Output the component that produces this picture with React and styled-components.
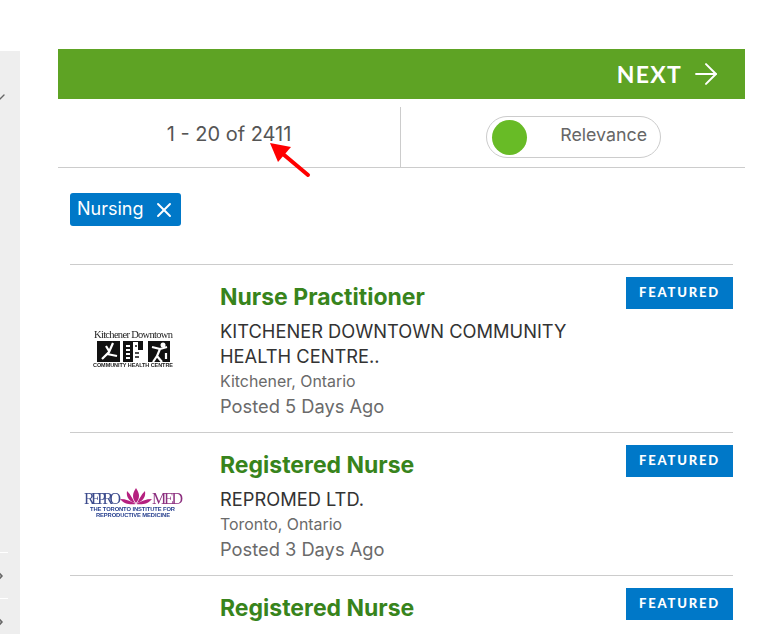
import React from 'react';
import styled, { createGlobalStyle } from 'styled-components';
import { ArrowRight, ChevronDown, ChevronRight, X } from 'lucide-react';

const GlobalStyle = createGlobalStyle`
  html, body {
    margin: 0;
    height: 634px;
    overflow: hidden;
    background: #fff;
    font-family: Inter, "Liberation Sans", sans-serif;
  }
`;

const Page = styled.div`
  display: flex;
  height: 634px;
  overflow: hidden;
`;

const Sidebar = styled.aside`
  width: 20px;
  margin-top: 51px;
  background: #eee;
  color: #666;
  display: flex;
  flex-direction: column;
  overflow: hidden;
`;

const SideTop = styled.div`
  flex: none;
  height: 501px;
  padding-top: 38px;
  box-sizing: border-box;
  svg { display: block; margin-left: -8px; }
`;

const SideItem = styled.div`
  flex: none;
  width: 8px;
  height: 45px;
  border-top: 1px solid #fff;
  display: flex;
  align-items: center;
  svg { flex: none; margin-left: -8px; }
`;

const Main = styled.main`
  width: 687px;
  margin: 49px 0 0 38px;
`;

const NextBar = styled.div`
  height: 50px;
  background: #5ea324;
  color: #fff;
  display: flex;
  align-items: center;
  justify-content: flex-end;
  gap: 7px;
  padding-right: 22px;
  font: 700 23px Lato, sans-serif;
  letter-spacing: 1.3px;
  line-height: 48px;
`;

const Stats = styled.div`
  display: flex;
  height: 60px;
  padding-top: 8px;
  border-bottom: 1px solid #ccc;
`;

const Count = styled.div`
  position: relative;
  width: 342px;
  padding-bottom: 6px;
  box-sizing: border-box;
  display: flex;
  align-items: center;
  justify-content: center;
  font-size: 20px;
  color: #555;
`;

const Pointer = styled.svg`
  position: absolute;
  left: 205px;
  top: 28px;
`;

const SortCell = styled.div`
  flex: 1;
  border-left: 1px solid #ccc;
  display: flex;
  align-items: center;
  justify-content: center;
`;

const SortToggle = styled.div`
  width: 175px;
  height: 42px;
  box-sizing: border-box;
  border: 1px solid #ccc;
  border-radius: 21px;
  padding: 0 13px 0 5px;
  margin-left: 1px;
  display: flex;
  align-items: center;
  justify-content: space-between;
  font-size: 17.8px;
  color: #666;
`;

const SortLabel = styled.span`
  margin-bottom: 6px;
`;

const Knob = styled.span`
  width: 35px;
  height: 35px;
  border-radius: 50%;
  background: #68bb26;
`;

const Results = styled.div`
  padding: 25px 12px 0;
`;

const Tag = styled.div`
  display: inline-flex;
  align-items: center;
  gap: 8px;
  height: 33px;
  padding: 0 5px 0 7px;
  border-radius: 3px;
  background: #0078c8;
  color: #fff;
  font-size: 18px;
  margin-bottom: 38px;
`;

const TagLabel = styled.span`
  margin-bottom: 2px;
`;

const Row = styled.article`
  display: flex;
  border-top: 1px solid #ccc;
  padding: 16px 0 13px;
`;

const LogoCell = styled.div`
  width: 128px;
  margin-right: 22px;
  flex: none;
  display: flex;
  align-items: center;
  justify-content: center;
`;

const LogoArt = styled.svg`
  filter: blur(0.6px);
`;

const Info = styled.div`
  flex: 1;
  min-width: 0;
`;

const Title = styled.h3`
  margin: 0 0 6px;
  font-size: 23px;
  line-height: 32px;
  font-weight: 700;
  color: #38841c;
`;

const Company = styled.div`
  width: 360px;
  font-size: 18.3px;
  line-height: 25px;
  color: #333;
`;

const Location = styled.div`
  font-size: 15.9px;
  line-height: 25px;
  color: #6a6a6a;
`;

const Posted = styled.div`
  font-size: 18.3px;
  line-height: 25px;
  color: #6a6a6a;
`;

const Badge = styled.span`
  flex: none;
  align-self: flex-start;
  margin-top: -4px;
  width: 107px;
  height: 32px;
  padding-bottom: 2px;
  box-sizing: border-box;
  background: #0078c8;
  color: #fff;
  display: flex;
  align-items: center;
  justify-content: center;
  font: 900 13px Lato, sans-serif;
  letter-spacing: 1.8px;
`;

const KitchenerLogo = () => (
  <LogoArt width="128" height="48" viewBox="0 0 128 48">
    <text x="24" y="12" fontFamily="Liberation Serif, serif" fontSize="10.5" textLength="79" fill="#222">Kitchener Downtown</text>
    <rect x="27" y="15" width="23" height="21" fill="#111" />
    <rect x="53" y="15" width="20" height="21" fill="#111" />
    <rect x="78" y="15" width="22" height="21" fill="#111" />
    <path d="M32 33 L39 26 L43 17 M37 28 L47 30 M36 20 L39 25" stroke="#fff" strokeWidth="2.2" fill="none" />
    <path d="M63 36 V16 H68 V24 H73 V36 Z" fill="#fff" />
    <path d="M56 20h4M56 24h4M56 28h4M56 32h4" stroke="#fff" strokeWidth="1.8" />
    <path d="M65 20h2M65 27h4M65 31h4" stroke="#111" strokeWidth="1.4" />
    <circle cx="93" cy="19" r="2.5" fill="#fff" />
    <path d="M82 21 L90 23 L87 30 L92 36 M87 30 L83 36 M90 23 L97 21 M96 27 V33" stroke="#fff" strokeWidth="2.2" fill="none" />
    <text x="23" y="41" fontFamily="Liberation Sans, sans-serif" fontWeight="700" fontSize="5.5" textLength="80" fill="#222">COMMUNITY HEALTH CENTRE</text>
  </LogoArt>
);

const ReproLogo = () => (
  <LogoArt width="128" height="40" viewBox="0 0 128 40">
    <text x="14" y="18" fontFamily="Liberation Serif, serif" fontSize="16" textLength="37" fill="#3b4a8c">REPRO</text>
    <text x="82" y="18" fontFamily="Liberation Serif, serif" fontSize="16" textLength="31" fill="#8c2f7f">MED</text>
    <g fill="#b5207f">
      <path d="M66 2 C62 8 62 12 66 17 C70 12 70 8 66 2 Z" />
      <path d="M57 5 C56 11 59 15 65 17 C62 12 61 9 57 5 Z" />
      <path d="M75 5 C76 11 73 15 67 17 C70 12 71 9 75 5 Z" />
      <path d="M50 13 C54 18 60 19 66 18 C61 15 56 13 50 13 Z" />
      <path d="M82 13 C78 18 72 19 66 18 C71 15 76 13 82 13 Z" />
    </g>
    <text x="20" y="25" fontFamily="Liberation Sans, sans-serif" fontWeight="700" fontSize="5.8" textLength="85" fill="#27408f">THE TORONTO INSTITUTE FOR</text>
    <text x="26" y="31" fontFamily="Liberation Sans, sans-serif" fontWeight="700" fontSize="5.8" textLength="74" fill="#27408f">REPRODUCTIVE MEDICINE</text>
  </LogoArt>
);

const JobRow = ({ title, logo, company, location, posted }) => (
  <Row>
    <LogoCell>{logo}</LogoCell>
    <Info>
      <Title>{title}</Title>
      {company && <Company>{company}</Company>}
      {location && <Location>{location}</Location>}
      {posted && <Posted>{posted}</Posted>}
    </Info>
    <Badge>FEATURED</Badge>
  </Row>
);

export default function App() {
  return (
    <>
      <GlobalStyle />
      <Page>
        <Sidebar>
          <SideTop>
            <ChevronDown size={16} strokeWidth={2} />
          </SideTop>
          <SideItem><ChevronRight size={16} strokeWidth={2.5} /></SideItem>
          <SideItem><ChevronRight size={16} strokeWidth={2.5} /></SideItem>
        </Sidebar>
        <Main>
          <NextBar>
            NEXT
            <ArrowRight size={34} strokeWidth={1.4} />
          </NextBar>
          <Stats>
            <Count>
              1 - 20 of 2411
              <Pointer width="50" height="44" viewBox="0 0 50 44">
                <path d="M45 40 L20 19" stroke="#f00" strokeWidth="4" strokeLinecap="round" />
                <path d="M7 8 L28 12 L15 27 Z" fill="#f00" />
              </Pointer>
            </Count>
            <SortCell>
              <SortToggle>
                <Knob />
                <SortLabel>Relevance</SortLabel>
              </SortToggle>
            </SortCell>
          </Stats>
          <Results>
            <Tag>
              <TagLabel>Nursing</TagLabel>
              <X size={24} strokeWidth={1.9} />
            </Tag>
            <JobRow
              title="Nurse Practitioner"
              logo={<KitchenerLogo />}
              company="KITCHENER DOWNTOWN COMMUNITY HEALTH CENTRE.."
              location="Kitchener, Ontario"
              posted="Posted 5 Days Ago"
            />
            <JobRow
              title="Registered Nurse"
              logo={<ReproLogo />}
              company="REPROMED LTD."
              location="Toronto, Ontario"
              posted="Posted 3 Days Ago"
            />
            <JobRow title="Registered Nurse" />
          </Results>
        </Main>
      </Page>
    </>
  );
}
